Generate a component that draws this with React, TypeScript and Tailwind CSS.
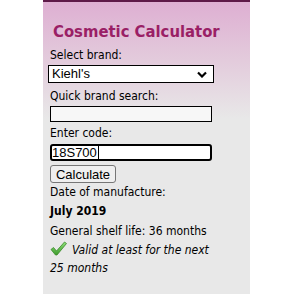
import React from "react";

const CheckMark = () => (
  <svg width="17" height="15" viewBox="0 0 17 15" className="mr-[5px] inline-block shrink-0 align-[-2px]">
    <defs>
      <linearGradient id="ck" x1="0" y1="0" x2="0" y2="1">
        <stop offset="0" stopColor="#8fe07a" />
        <stop offset="1" stopColor="#3d9a2c" />
      </linearGradient>
    </defs>
    <path
      d="M1 8.5 L3.5 6.5 L6.5 10 L14.5 1 L16.5 2.5 L7 14 L5.5 14 Z"
      fill="url(#ck)"
      stroke="#3a8a2a"
      strokeWidth="0.8"
      strokeLinejoin="round"
    />
  </svg>
);

export default function App() {
  return (
    <div className="min-h-[294px] w-[294px] bg-white">
      <div
        className="ml-[43px] min-h-[294px] w-[207px] border-t-2 border-[#5e1a48] bg-[linear-gradient(to_bottom,#deafd2_0%,#e3cbdc_20%,#e8e8e8_40%,#e8e8e8_100%)] px-[7px] text-[12px] leading-[18px] text-black"
        style={{ fontFamily: '"DejaVu Sans Condensed", Tahoma, sans-serif' }}
      >
        <h1 className="pl-[3px] pt-[19px] pb-[2px] text-[16.5px] font-bold leading-[22px] text-[#9a1f66]">
          Cosmetic Calculator
        </h1>
        <div className="flex flex-col">
          <label className="h-[20px] leading-[20px]">Select brand:</label>
          <div
            className="-ml-[2px] flex h-[18px] w-[166px] items-center justify-between border border-black bg-white pl-[3px] pr-[6px] text-[13px]"
            style={{ fontFamily: '"Liberation Sans", Arial, sans-serif' }}
          >
            <span>Kiehl's</span>
            <svg width="10" height="7" viewBox="0 0 10 7">
              <path d="M1 1.5 L5 5.5 L9 1.5" fill="none" stroke="#000" strokeWidth="2.2" />
            </svg>
          </div>
          <label className="mt-[3px] h-[20px] leading-[20px]">Quick brand search:</label>
          <div className="h-[16px] w-[162px] border border-black bg-[#f7f7f7]" />
          <label className="h-[22px] leading-[22px]">Enter code:</label>
          <div
            className="flex h-[17px] w-[162px] items-center rounded-[3px] border-2 border-black bg-white text-[13px]"
            style={{ fontFamily: '"Liberation Sans", Arial, sans-serif' }}
          >
            <span className="leading-none">18S700</span>
            <span className="ml-px h-[13px] w-px bg-black" />
          </div>
          <button
            className="mt-[4px] h-[18px] w-[66px] rounded-[3px] border border-[#767676] bg-[#efefef] text-[13px] leading-none"
            style={{ fontFamily: '"Liberation Sans", Arial, sans-serif' }}
          >
            Calculate
          </button>
        </div>
        <div>
          <div className="h-[18px]">Date of manufacture:</div>
          <div className="h-[20px] leading-[20px] font-bold">July 2019</div>
          <div className="h-[20px] leading-[20px]">General shelf life: 36 months</div>
          <div className="italic">
            <CheckMark />
            Valid at least for the next
            <br />
            25 months
          </div>
        </div>
      </div>
    </div>
  );
}
